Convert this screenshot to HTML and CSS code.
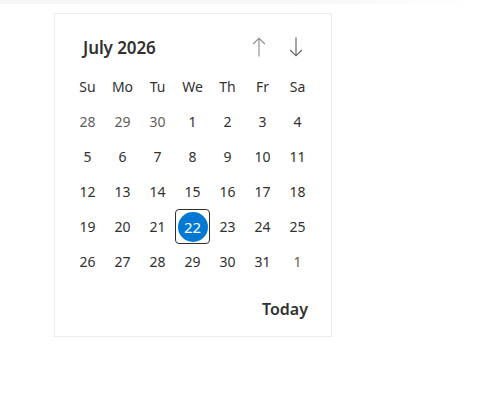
FILE: index.html
```html
<!DOCTYPE html>
<html lang="en">
<head>
<meta charset="utf-8">
<title>Calendar</title>
<link rel="stylesheet" href="styles.css">
</head>
<body>
<div class="topband"></div>
<div class="calendar">
  <div class="header">
    <div class="title">July 2026</div>
    <div class="nav">
      <button class="navbtn up" aria-label="Previous month">
        <svg width="14" height="20" viewBox="0 0 14 20"><path d="M7 1.2V19.5M1.2 7L7 1.2L12.8 7" fill="none" stroke="#8a8886" stroke-width="1.1"/></svg>
      </button>
      <button class="navbtn down" aria-label="Next month">
        <svg width="14" height="20" viewBox="0 0 14 20"><path d="M7 0.5V18.8M1.2 13L7 18.8L12.8 13" fill="none" stroke="#605e5c" stroke-width="1.1"/></svg>
      </button>
    </div>
  </div>
  <div class="grid">
    <div class="dow">Su</div><div class="dow">Mo</div><div class="dow">Tu</div><div class="dow">We</div><div class="dow">Th</div><div class="dow">Fr</div><div class="dow">Sa</div>
    <div class="day out">28</div><div class="day out">29</div><div class="day out">30</div><div class="day">1</div><div class="day">2</div><div class="day">3</div><div class="day">4</div>
    <div class="day">5</div><div class="day">6</div><div class="day">7</div><div class="day">8</div><div class="day">9</div><div class="day">10</div><div class="day">11</div>
    <div class="day">12</div><div class="day">13</div><div class="day">14</div><div class="day">15</div><div class="day">16</div><div class="day">17</div><div class="day">18</div>
    <div class="day">19</div><div class="day">20</div><div class="day">21</div><div class="day selected"><span class="dot">22</span></div><div class="day">23</div><div class="day">24</div><div class="day">25</div>
    <div class="day">26</div><div class="day">27</div><div class="day">28</div><div class="day">29</div><div class="day">30</div><div class="day">31</div><div class="day out">1</div>
  </div>
  <div class="footer">
    <button class="today">Today</button>
  </div>
</div>
</body>
</html>
```
FILE: styles.css
```css
html, body {
  margin: 0;
  padding: 0;
  background: #ffffff;
}
body {
  font-family: "Noto Sans", "Open Sans", sans-serif;
  color: #323130;
}
.topband {
  height: 4px;
  background: linear-gradient(to right, #f6f6f6 0%, #f7f7f7 65%, #fcfcfc 85%, #ffffff 100%);
}
.calendar {
  box-sizing: border-box;
  width: 278px;
  margin: 9px 0 0 54px;
  border: 1px solid #ebebeb;
  padding: 17px 16px 12px 15px;
}
.header {
  display: flex;
  align-items: center;
  justify-content: space-between;
  height: 32px;
  margin-bottom: 6px;
}
.title {
  font-size: 17px;
  font-weight: 600;
  padding-left: 13px;
  letter-spacing: -0.1px;
}
.nav {
  display: flex;
  gap: 9px;
  padding-right: 5px;
}
.navbtn {
  width: 28px;
  height: 28px;
  border: none;
  background: transparent;
  padding: 0;
  display: flex;
  align-items: center;
  justify-content: center;
}
.grid {
  display: grid;
  grid-template-columns: repeat(7, 35px);
  grid-auto-rows: 35px;
}
.dow, .day {
  display: flex;
  align-items: center;
  justify-content: center;
  font-size: 14px;
}
.day.out {
  color: #605e5c;
}
.day.selected {
  box-sizing: border-box;
  border: 1px solid #323130;
  border-radius: 4px;
}
.dot {
  width: 30px;
  height: 30px;
  border-radius: 50%;
  background: #0078d4;
  color: #ffffff;
  display: flex;
  align-items: center;
  justify-content: center;
  font-size: 15px;
}
.footer {
  display: flex;
  justify-content: flex-end;
  margin-top: 15px;
  height: 30px;
  align-items: center;
}
.today {
  border: none;
  background: transparent;
  font-family: inherit;
  font-size: 16px;
  font-weight: 600;
  color: #323130;
  padding: 0 7px 0 8px;
}
```
